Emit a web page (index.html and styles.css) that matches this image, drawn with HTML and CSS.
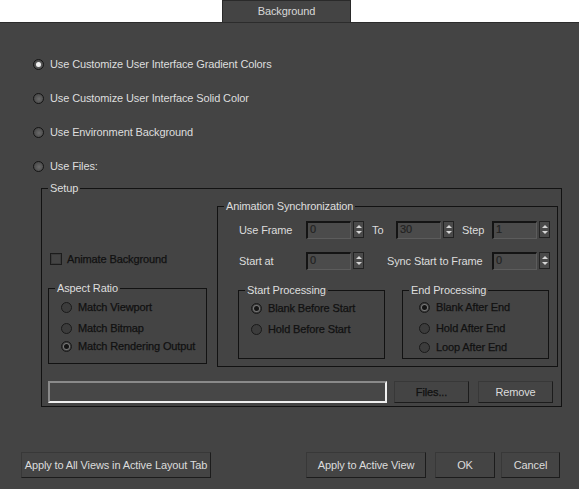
FILE: index.html
```html
<!DOCTYPE html>
<html>
<head>
    <meta charset="utf-8">
    <title>Background</title>
    <link rel="stylesheet" href="styles.css">
</head>
<body>

<div id="tabbar">
    <div class="tab">Background</div>
</div>

<div id="panel">

    <!--source choice-->
    <ul class="sources">
        <li><span class="radio on"></span>Use Customize User Interface Gradient Colors</li>
        <li><span class="radio"></span>Use Customize User Interface Solid Color</li>
        <li><span class="radio"></span>Use Environment Background</li>
        <li><span class="radio"></span>Use Files:</li>
    </ul>

    <!--Setup Block-->
    <div class="group setup">
        <p class="cap">Setup</p>
        <div class="setup-top">
            <div class="leftcol">
                <div class="check off"><span class="box"></span>Animate Background</div>
                <div class="group aspect">
                    <p class="cap">Aspect Ratio</p>
                    <div class="radio-row off r1"><span class="radio"></span>Match Viewport</div>
                    <div class="radio-row off r2"><span class="radio"></span>Match Bitmap</div>
                    <div class="radio-row off r3"><span class="radio on"></span>Match Rendering Output</div>
                </div>
            </div>

            <div class="group anim">
                <p class="cap">Animation Synchronization</p>
                <div class="row">
                    <span class="lbl w-frame">Use Frame</span>
                    <div class="spin"><span class="field">0</span><span class="arrows"><i class="up"></i><i class="dn"></i></span></div>
                    <span class="lbl w-to">To</span>
                    <div class="spin"><span class="field">30</span><span class="arrows"><i class="up"></i><i class="dn"></i></span></div>
                    <span class="lbl w-step">Step</span>
                    <div class="spin"><span class="field">1</span><span class="arrows"><i class="up"></i><i class="dn"></i></span></div>
                </div>
                <div class="row second">
                    <span class="lbl w-frame">Start at</span>
                    <div class="spin"><span class="field">0</span><span class="arrows"><i class="up"></i><i class="dn"></i></span></div>
                    <span class="lbl w-sync">Sync Start to Frame</span>
                    <div class="spin"><span class="field">0</span><span class="arrows"><i class="up"></i><i class="dn"></i></span></div>
                </div>
                <div class="procs">
                    <div class="group proc">
                        <p class="cap">Start Processing</p>
                        <div class="radio-row off r1"><span class="radio on"></span>Blank Before Start</div>
                        <div class="radio-row off r2"><span class="radio"></span>Hold Before Start</div>
                    </div>
                    <div class="group proc end">
                        <p class="cap">End Processing</p>
                        <div class="radio-row off r1"><span class="radio on"></span>Blank After End</div>
                        <div class="radio-row off r2"><span class="radio"></span>Hold After End</div>
                        <div class="radio-row off r3"><span class="radio"></span>Loop After End</div>
                    </div>
                </div>
            </div>
        </div>

        <div class="filerow">
            <div class="path"></div>
            <button class="btn off b-files">Files...</button>
            <button class="btn b-remove">Remove</button>
        </div>
    </div>

    <div id="actions">
        <button class="btn b-all">Apply to All Views in Active Layout Tab</button>
        <button class="btn b-active">Apply to Active View</button>
        <button class="btn b-ok">OK</button>
        <button class="btn b-cancel">Cancel</button>
    </div>

</div>

</body>
</html>
```

FILE: styles.css
```css
*{ margin: 0; padding: 0; box-sizing: border-box; }
ul{ list-style: none; }
html,body{ height: 100%; }
body{ background: #fff; font: 11px/14px "Liberation Sans", Arial, sans-serif; letter-spacing: -0.12px; color: #dcdcdc; display: flex; flex-direction: column; }

/*tab*/
#tabbar{ height: 22px; padding-left: 222px; display: flex; align-items: flex-end; }
.tab{ width: 129px; height: 22px; background: #444; border: 1px solid #2a2a2a; border-bottom: none; text-align: center; line-height: 21px; color: #d8d8d8; }

#panel{ flex: 1; background: #444; border-top: 1px solid #2c2c2c; }

/*radio + checkbox*/
.radio{ display: inline-block; width: 11px; height: 11px; border-radius: 50%; border: 1px solid #151515; background: radial-gradient(circle at 55% 55%, #6a6a6a 0, #4a4a4a 70%); margin-right: 6px; vertical-align: -2px; position: relative; }
.radio.on:after{ content: ""; position: absolute; left: 2px; top: 2px; width: 5px; height: 5px; border-radius: 50%; background: #f2f2f2; }
.off .radio{ background: #3c3c3c; border-color: #1a1a1a; }
.off .radio.on:after{ background: #151515; box-shadow: 0 0 0 1px #777; }
.off{ color: #111; -webkit-text-stroke: 0.25px #111; }

.sources{ padding: 33px 0 0 33px; }
.sources li{ height: 16px; line-height: 16px; margin-bottom: 18px; color: #dedede; }
.sources li:last-child{ margin-bottom: 14px; }
.sources li .radio{ margin-right: 6px; }

/*group boxes*/
.group{ position: relative; border: 1px solid #121212; }
.group .cap{ position: absolute; top: -7px; left: 6px; padding: 0 2px; background: #444; line-height: 13px; color: #dedede; -webkit-text-stroke: 0; }

.setup{ margin: 0 0 0 41px; width: 521px; height: 219px; padding: 17px 3px 0 6px; }
.setup-top{ display: flex; gap: 10px; }
.leftcol{ width: 159px; padding-top: 47px; }

.check{ height: 13px; line-height: 13px; padding-left: 2px; }
.check .box{ display: inline-block; width: 12px; height: 12px; border: 1px solid #1c1c1c; box-shadow: inset 0 0 0 1px #3a3a3a; background: #444; vertical-align: -2px; margin-right: 5px; }

.aspect{ margin-top: 22px; height: 76px; padding: 11px 0 0 12px; }
.radio-row{ height: 14px; line-height: 14px; }
.radio-row .radio{ margin-right: 6px; }
.radio-row.r2{ margin-top: 7px; }
.radio-row.r3{ margin-top: 4px; }

/*animation sync*/
.anim{ width: 341px; height: 161px; padding: 14px 0 0 21px; }
.row{ display: flex; align-items: center; height: 18px; }
.row.second{ margin-top: 13px; }
.lbl{ display: inline-block; }
.w-frame{ width: 67px; }
.w-to{ width: 24px; margin-left: 8px; }
.w-step{ width: 30px; margin-left: 8px; }
.w-sync{ width: 105px; margin-left: 23px; }

.spin{ display: flex; gap: 2px; }
.field{ width: 45px; height: 18px; background: #4b4b4b; border: 1px solid #5c5c5c; border-top: 2px solid #141414; border-left: 2px solid #141414; color: #222; -webkit-text-stroke: 0.2px #222; line-height: 13px; padding-left: 2px; }
.arrows{ width: 11px; height: 17px; border: 1px solid #222; background: #4a4a4a; display: flex; flex-direction: column; align-items: center; justify-content: space-around; padding: 2px 0; }
.arrows i{ width: 0; height: 0; border-left: 3px solid transparent; border-right: 3px solid transparent; }
.arrows .up{ border-bottom: 3px solid #d6d6d6; }
.arrows .dn{ border-top: 3px solid #d6d6d6; }

.procs{ display: flex; gap: 17px; margin: 20px 0 0 -1px; }
.proc{ width: 147px; height: 69px; padding: 10px 0 0 12px; }
.proc.end{ padding-left: 16px; padding-top: 9px; }
.proc.end .r3{ margin-top: 5px; }

/*file row*/
.filerow{ display: flex; margin-top: 14px; }
.path{ width: 339px; height: 22px; border: 2px solid #f0f0f0; border-top-color: #8a8a8a; border-left-color: #8a8a8a; background: #474747; }

.btn{ height: 22px; background: #444; border: 1px solid #1c1c1c; border-top-color: #383838; border-left-color: #383838; font: 11px "Liberation Sans", Arial, sans-serif; letter-spacing: -0.12px; color: #dcdcdc; }
.btn.off{ color: #111; -webkit-text-stroke: 0.25px #111; }
.b-files{ width: 75px; margin-left: 7px; }
.b-remove{ width: 75px; margin-left: 9px; }

/*bottom buttons*/
#actions{ display: flex; margin: 45px 0 0 21px; }
#actions .btn{ height: 26px; }
.b-all{ width: 190px; }
.b-active{ width: 120px; margin-left: 95px; }
.b-ok{ width: 60px; margin-left: 9px; }
.b-cancel{ width: 59px; margin-left: 6px; }
```
